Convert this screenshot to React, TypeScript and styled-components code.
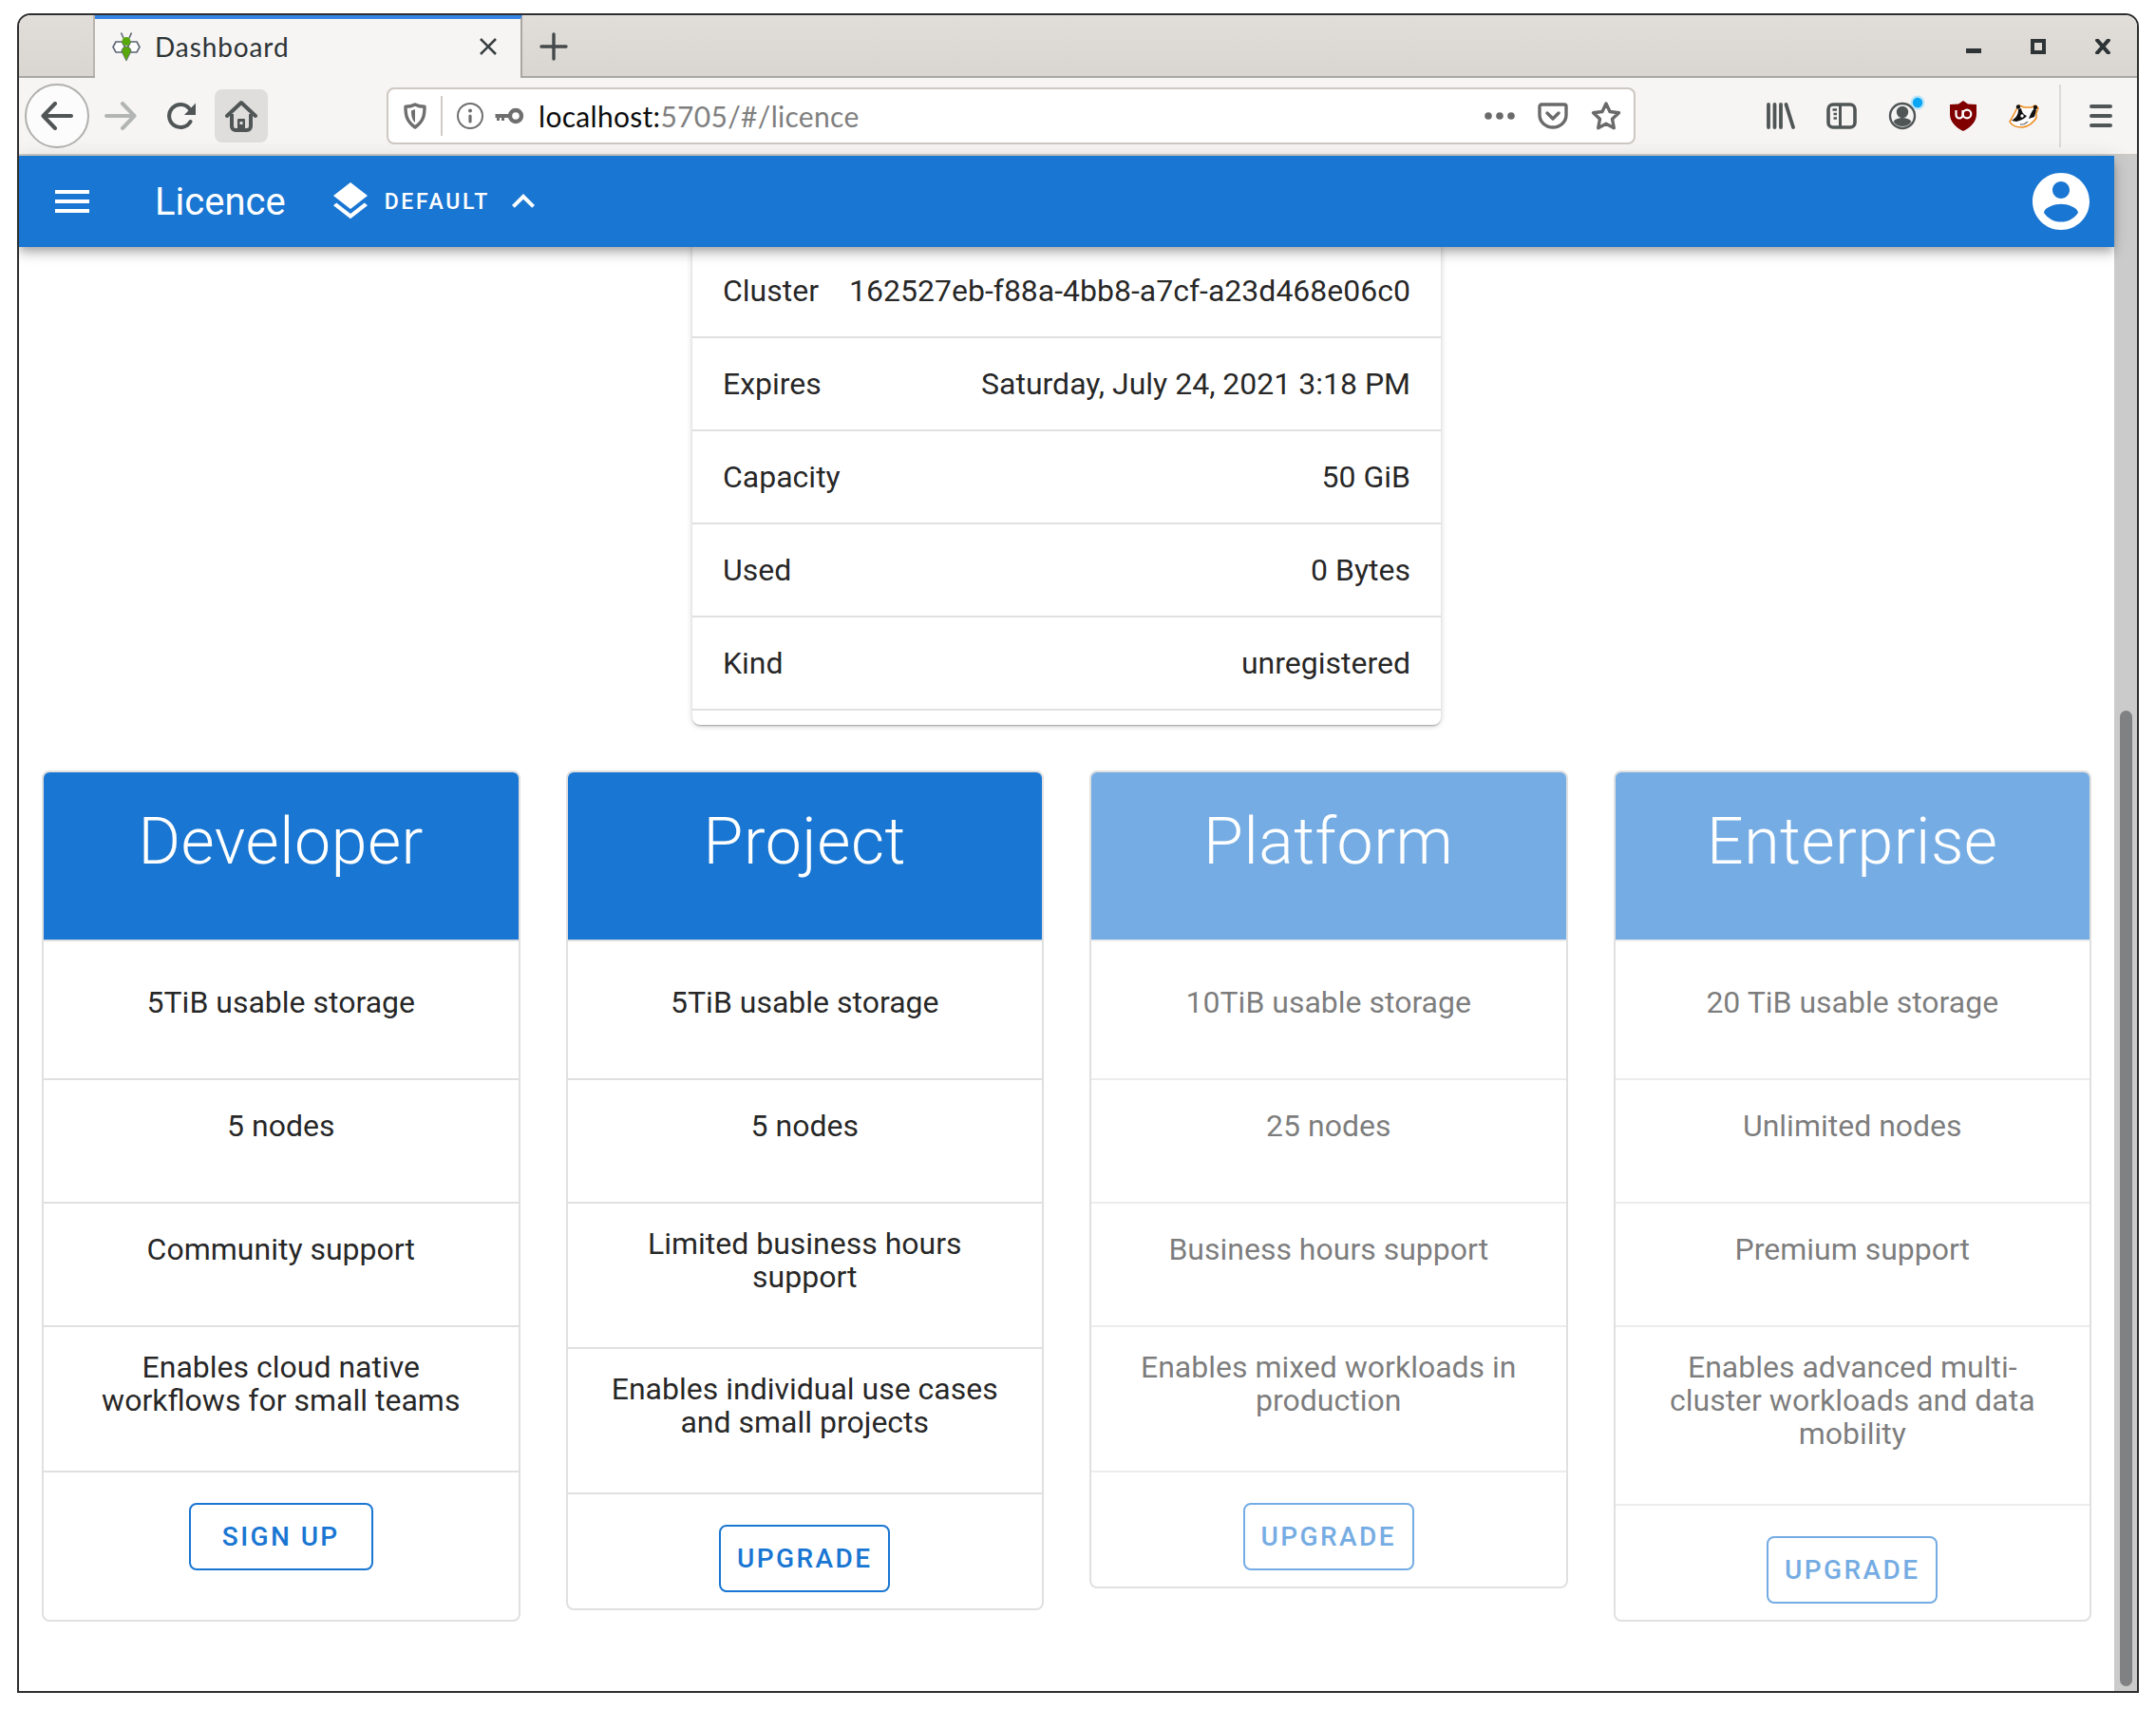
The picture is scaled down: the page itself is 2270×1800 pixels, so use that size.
import { createGlobalStyle } from "styled-components";
import styled from "styled-components";

const GlobalStyle = createGlobalStyle`
  html, body {
    margin: 0;
    padding: 0;
    background: #ffffff;
  }
  * {
    box-sizing: border-box;
  }
`;

const BLUE = "#1976d2";
const ICON = "#505556";

const Window = styled.div`
  display: flex;
  flex-direction: column;
  width: 2234px;
  height: 1768px;
  margin: 14px 0 0 18px;
  border: 2px solid #2e2e2e;
  border-radius: 14px 14px 0 0;
  overflow: hidden;
  background: #ffffff;
`;

const TitleBar = styled.div`
  display: flex;
  align-items: stretch;
  flex: none;
  height: 66px;
  background: linear-gradient(#e1deda, #d9d6d1);
  border-bottom: 2px solid #aaa8a3;
`;

const TabStub = styled.div`
  flex: none;
  width: 80px;
  border-right: 2px solid #b9b5ae;
`;

const Tab = styled.div`
  display: flex;
  align-items: center;
  flex: none;
  width: 450px;
  height: 66px;
  padding: 0 24px 4px 18px;
  background: #f6f5f4;
  border-top: 4px solid #3584e4;
  border-right: 2px solid #a9a6a0;
`;

const TabTitle = styled.span`
  flex: 1;
  margin-left: 15px;
  font-family: Lato, sans-serif;
  font-size: 28px;
  letter-spacing: 0.9px;
  color: #2e3436;
`;

const NewTab = styled.div`
  display: flex;
  align-items: center;
  margin-left: 18px;
  padding-top: 2px;
`;

const WindowControls = styled.div`
  display: flex;
  align-items: center;
  margin-left: auto;
  padding: 2px 28px 0 0;
  gap: 52px;
`;

const NavBar = styled.div`
  display: flex;
  align-items: center;
  flex: none;
  height: 82px;
  padding-left: 6px;
  background: #f6f5f4;
  border-bottom: 2px solid #cdc9c3;
`;

const BackButton = styled.div`
  display: flex;
  align-items: center;
  justify-content: center;
  flex: none;
  width: 68px;
  height: 68px;
  border: 2px solid #b0b0ae;
  border-radius: 50%;
  background: #fcfcfc;
`;

const NavSlot = styled.div<{ $width: number }>`
  display: flex;
  align-items: center;
  justify-content: center;
  flex: none;
  width: ${(p) => p.$width}px;
`;

const HomeButton = styled.div`
  display: flex;
  align-items: center;
  justify-content: center;
  flex: none;
  width: 56px;
  height: 56px;
  margin-left: 2px;
  border-radius: 8px;
  background: #dfdedc;
`;

const UrlBar = styled.div`
  display: flex;
  align-items: center;
  flex: none;
  width: 1315px;
  height: 60px;
  margin-left: 125px;
  padding: 0 13px 0 16px;
  background: #ffffff;
  border: 2px solid #cdc8c1;
  border-radius: 8px;
`;

const UrlDivider = styled.div`
  flex: none;
  width: 2px;
  height: 42px;
  margin: 0 15px 0 15px;
  background: #cfcbc5;
`;

const UrlText = styled.div`
  flex: 1;
  margin-left: 4px;
  font-family: Lato, sans-serif;
  font-size: 30px;
  letter-spacing: 0.3px;
  color: #7f7f7f;
  white-space: nowrap;
`;

const UrlHost = styled.span`
  color: #0c0c0c;
`;

const UrlActions = styled.div`
  display: flex;
  align-items: center;
  gap: 24px;
`;

const ToolbarIcons = styled.div`
  display: flex;
  align-items: center;
  margin-left: 121px;
`;

const ToolbarDivider = styled.div`
  flex: none;
  width: 2px;
  height: 66px;
  margin-left: 5px;
  background: #dcdad6;
`;

const MenuSlot = styled.div`
  display: flex;
  margin-left: 30px;
`;

const Viewport = styled.div`
  display: flex;
  flex: 1;
  min-height: 0;
`;

const Page = styled.div`
  display: flex;
  flex-direction: column;
  flex: 1;
  min-width: 0;
`;

const ScrollTrack = styled.div`
  flex: none;
  width: 24px;
  padding: 584px 5px 5px 6px;
  background: #cbcbcb;
`;

const ScrollThumb = styled.div`
  height: 100%;
  border-radius: 7px;
  background: #7f8182;
`;

const AppBar = styled.header`
  position: relative;
  z-index: 2;
  display: flex;
  align-items: center;
  flex: none;
  height: 96px;
  padding: 0 20px 0 38px;
  background: ${BLUE};
  color: #ffffff;
  box-shadow: 0 4px 8px -2px rgba(0, 0, 0, 0.2), 0 8px 10px 0 rgba(0, 0, 0, 0.14), 0 2px 20px 0 rgba(0, 0, 0, 0.12);
`;

const AppTitle = styled.div`
  margin-left: 69px;
  font-family: Roboto, sans-serif;
  font-size: 40px;
  font-weight: 400;
`;

const Namespace = styled.div`
  display: flex;
  align-items: center;
  margin-left: 44px;
`;

const NamespaceLabel = styled.span`
  margin: 0 11px 0 12px;
  font-family: Roboto, sans-serif;
  font-size: 23px;
  font-weight: 500;
  letter-spacing: 2.7px;
`;

const Avatar = styled.div`
  display: flex;
  margin-left: auto;
`;

const LicenceCard = styled.div`
  flex: none;
  align-self: center;
  width: 788px;
  margin-top: -2px;
  padding-bottom: 15px;
  border-radius: 0 0 8px 8px;
  background: #ffffff;
  box-shadow: 0 2px 2px -1px rgba(0, 0, 0, 0.3), 0 1px 6px 0 rgba(0, 0, 0, 0.2);
`;

const LicenceRow = styled.div`
  display: flex;
  align-items: center;
  justify-content: space-between;
  height: 98px;
  padding: 0 32px;
  border-bottom: 2px solid #e0e0e0;
  font-family: Roboto, sans-serif;
  font-size: 32px;
  color: rgba(0, 0, 0, 0.87);
`;

const Plans = styled.div`
  display: grid;
  grid-template-columns: repeat(4, 1fr);
  align-items: start;
  gap: 48px;
  margin-top: 48px;
  padding: 0 24px;
`;

const PlanCard = styled.div<{ $stretch?: boolean }>`
  align-self: ${(p) => (p.$stretch ? "stretch" : "start")};
  border: 2px solid #e0e0e0;
  border-radius: 8px;
  overflow: hidden;
  background: #ffffff;
`;

const PlanBody = styled.div<{ $muted?: boolean }>`
  opacity: ${(p) => (p.$muted ? 0.6 : 1)};
`;

const PlanHeader = styled.div`
  height: 178px;
  padding-top: 31px;
  background: ${BLUE};
  border-bottom: 2px solid #e0e0e0;
  font-family: Roboto, sans-serif;
  font-size: 68px;
  font-weight: 300;
  line-height: 84px;
  letter-spacing: 0.5px;
  text-align: center;
  color: #ffffff;
`;

const Feature = styled.div<{ $first?: boolean }>`
  display: flex;
  align-items: center;
  justify-content: center;
  min-height: ${(p) => (p.$first ? 146 : 130)}px;
  padding: ${(p) => (p.$first ? 40 : 25)}px 32px 56px;
  border-bottom: 2px solid #e0e0e0;
  font-family: Roboto, sans-serif;
  font-size: 32px;
  line-height: 35px;
  text-align: center;
  color: rgba(0, 0, 0, 0.87);
`;

const PlanAction = styled.div`
  display: flex;
  justify-content: center;
  padding: 32px 0 17px;
`;

const PlanButton = styled.div<{ $wide?: boolean }>`
  display: flex;
  align-items: center;
  height: 71px;
  padding: 0 ${(p) => (p.$wide ? 33 : 17)}px;
  border: 2px solid ${BLUE};
  border-radius: 8px;
  font-family: Roboto, sans-serif;
  font-size: 28px;
  font-weight: 500;
  letter-spacing: 2.4px;
  color: ${BLUE};
`;

type Plan = {
  name: string;
  features: string[];
  action: string;
  muted?: boolean;
  wide?: boolean;
};

const plans: Plan[] = [
  {
    name: "Developer",
    features: ["5TiB usable storage", "5 nodes", "Community support", "Enables cloud native workflows for small teams"],
    action: "SIGN UP",
    wide: true,
  },
  {
    name: "Project",
    features: ["5TiB usable storage", "5 nodes", "Limited business hours support", "Enables individual use cases and small projects"],
    action: "UPGRADE",
  },
  {
    name: "Platform",
    features: ["10TiB usable storage", "25 nodes", "Business hours support", "Enables mixed workloads in production"],
    action: "UPGRADE",
    muted: true,
  },
  {
    name: "Enterprise",
    features: ["20 TiB usable storage", "Unlimited nodes", "Premium support", "Enables advanced multi-cluster workloads and data mobility"],
    action: "UPGRADE",
    muted: true,
  },
];

const licence = [
  ["Cluster", "162527eb-f88a-4bb8-a7cf-a23d468e06c0"],
  ["Expires", "Saturday, July 24, 2021 3:18 PM"],
  ["Capacity", "50 GiB"],
  ["Used", "0 Bytes"],
  ["Kind", "unregistered"],
];

function BeeIcon() {
  return (
    <svg width="30" height="32" viewBox="0 0 30 32">
      <path d="M12 7 9.500 1.500M18 7l2.500-5.500" stroke="#5c6472" strokeWidth="1.600" fill="none" />
      <path d="M1 16.500 4 11h6.500l3 5.500-3 5.500H4zM29 16.500 26 11h-6.500l-3 5.500 3 5.500H26z" fill="#fff" stroke="#5c6472" strokeWidth="1.600" />
      <circle cx="15" cy="10.500" r="4.500" fill="#58a80c" />
      <path d="M15 31 10 21a5 5 0 0 1 10 0z" fill="#58a80c" stroke="#5c6472" strokeWidth="0.800" />
    </svg>
  );
}

function CloseTabIcon() {
  return (
    <svg width="20" height="20" viewBox="0 0 20 20">
      <path d="M2 2l16 16M18 2 2 18" stroke="#3a3f41" strokeWidth="2.600" />
    </svg>
  );
}

function PlusIcon() {
  return (
    <svg width="30" height="30" viewBox="0 0 30 30">
      <path d="M15 2v26M2 15h26" stroke="#44494b" strokeWidth="3.400" strokeLinecap="round" />
    </svg>
  );
}

function MinimizeIcon() {
  return (
    <svg width="16" height="16" viewBox="0 0 16 16">
      <rect x="0" y="10" width="16" height="5" fill="#2e3436" />
    </svg>
  );
}

function MaximizeIcon() {
  return (
    <svg width="16" height="16" viewBox="0 0 16 16">
      <rect x="2" y="2" width="12" height="12" fill="none" stroke="#2e3436" strokeWidth="4" />
    </svg>
  );
}

function WinCloseIcon() {
  return (
    <svg width="16" height="16" viewBox="0 0 16 16">
      <path d="M1 0l14 16M15 0 1 16" stroke="#2e3436" strokeWidth="4" />
    </svg>
  );
}

function ArrowIcon({ color, flip }: { color: string; flip?: boolean }) {
  return (
    <svg width="34" height="30" viewBox="0 0 34 30" style={flip ? { transform: "scaleX(-1)" } : undefined}>
      <path d="M32 15H3M15 2 2.500 15 15 28" fill="none" stroke={color} strokeWidth="4" strokeLinecap="round" strokeLinejoin="round" />
    </svg>
  );
}

function ReloadIcon() {
  return (
    <svg width="32" height="30" viewBox="0 0 32 30">
      <path d="M24.500 21a12 12 0 1 1-1-13.500" fill="none" stroke={ICON} strokeWidth="4" strokeLinecap="round" />
      <path d="M30 1.500v12.500H18z" fill={ICON} />
    </svg>
  );
}

function HomeIcon() {
  return (
    <svg width="34" height="34" viewBox="0 0 34 34">
      <path d="M2 17 17 3l15 14" fill="none" stroke={ICON} strokeWidth="4" strokeLinecap="round" strokeLinejoin="round" />
      <path d="M7 15v13a4 4 0 0 0 4 4h12a4 4 0 0 0 4-4V15" fill="none" stroke={ICON} strokeWidth="4" />
      <path d="M13 31V21a1 1 0 0 1 1-1h6a1 1 0 0 1 1 1v10z" fill={ICON} />
      <rect x="15.500" y="23" width="3" height="3" fill="#dfdedc" />
    </svg>
  );
}

function ShieldIcon() {
  return (
    <svg width="24" height="28" viewBox="0 0 24 28">
      <path d="M12 2c3 1.600 6 2.300 10 2.300 0 8-.5 15-10 21.700C2.500 19.300 2 12.300 2 4.300 6 4.300 9 3.600 12 2z" fill="none" stroke="#6f6f6f" strokeWidth="3.400" strokeLinejoin="round" />
      <path d="M12 7v14c-3.500-3-4-7-4-12.400z" fill="#6f6f6f" />
    </svg>
  );
}

function InfoIcon() {
  return (
    <svg width="28" height="28" viewBox="0 0 28 28">
      <circle cx="14" cy="14" r="13" fill="none" stroke="#6f6f6f" strokeWidth="2" />
      <circle cx="14" cy="8.500" r="2" fill="#6f6f6f" />
      <rect x="12.400" y="12.500" width="3.200" height="9" rx="1.600" fill="#6f6f6f" />
    </svg>
  );
}

function KeyIcon() {
  return (
    <svg width="32" height="18" viewBox="0 0 32 18">
      <circle cx="23" cy="9" r="6" fill="none" stroke="#6f6f6f" strokeWidth="4.400" />
      <path d="M17 7H1.500v4H3v3h3v-3h2v3h3v-3h6z" fill="#6f6f6f" />
    </svg>
  );
}

function DotsIcon() {
  return (
    <svg width="32" height="10" viewBox="0 0 32 10">
      <circle cx="4" cy="5" r="3.800" fill="#6a6a6a" />
      <circle cx="16" cy="5" r="3.800" fill="#6a6a6a" />
      <circle cx="28" cy="5" r="3.800" fill="#6a6a6a" />
    </svg>
  );
}

function PocketIcon() {
  return (
    <svg width="32" height="28" viewBox="0 0 32 28">
      <path d="M4 2h24a2 2 0 0 1 2 2v9a14 13 0 0 1-28 0V4a2 2 0 0 1 2-2z" fill="none" stroke="#6a6a6a" strokeWidth="3.400" />
      <path d="M10 11l6 6 6-6" fill="none" stroke="#6a6a6a" strokeWidth="3.400" strokeLinecap="round" strokeLinejoin="round" />
    </svg>
  );
}

function StarIcon() {
  return (
    <svg width="32" height="32" viewBox="0 0 32 32">
      <path d="M16 3l4 8.500 9.500 1.300-7 6.500 1.800 9.400L16 24.200l-8.300 4.500 1.800-9.400-7-6.500L12 11.500z" fill="none" stroke="#6a6a6a" strokeWidth="3.400" strokeLinejoin="round" />
    </svg>
  );
}

function LibraryIcon() {
  return (
    <svg width="30" height="28" viewBox="0 0 30 28">
      <path d="M2 2v24M8.500 2v24M15 2v24M20.500 2l7.500 24" stroke={ICON} strokeWidth="3.800" strokeLinecap="round" />
    </svg>
  );
}

function SidebarIcon() {
  return (
    <svg width="32" height="28" viewBox="0 0 32 28">
      <rect x="2" y="2" width="28" height="24" rx="5" fill="none" stroke={ICON} strokeWidth="3.600" />
      <path d="M14.500 2v24" stroke={ICON} strokeWidth="3" />
      <path d="M6.500 7.500h4.500M7.500 12h3.500M7.500 16.500h3.500" stroke={ICON} strokeWidth="2.400" />
    </svg>
  );
}

function AccountIcon() {
  return (
    <svg width="48" height="44" viewBox="0 0 48 44">
      <circle cx="24" cy="22" r="13" fill="none" stroke={ICON} strokeWidth="2.400" />
      <circle cx="24" cy="18" r="6.200" fill={ICON} />
      <path d="M14.500 28c2-3 6-4 9.500-4s7.500 1 9.500 4c-2 3.500-5.500 5-9.500 5s-7.500-1.500-9.500-5z" fill={ICON} />
      <circle cx="40" cy="8" r="7.500" fill="#00b3ff" fillOpacity="0.25" />
      <circle cx="40" cy="8" r="5.200" fill="#0aa5f5" />
    </svg>
  );
}

function UBlockIcon() {
  return (
    <svg width="28" height="32" viewBox="0 0 28 32">
      <path d="M14 0l5 3.500 9 .5v10c0 8-6 14-14 18C6 28 0 22 0 14V4l9-.5z" fill="#800000" />
      <path d="M6.500 10v5a3.500 3.500 0 0 0 7 0v-5" fill="none" stroke="#fff" strokeWidth="2.200" />
      <circle cx="18" cy="14" r="4.300" fill="none" stroke="#fff" strokeWidth="2.200" />
    </svg>
  );
}

function BadgerIcon() {
  return (
    <svg width="32" height="26" viewBox="0 0 32 26">
      <path d="M1 19C4 14 7 9 9 4l2-2 5 2h8l4-2 3 3-2 5v5c-3 5-9 10-15 10-6 0-11-2-13-6z" fill="#fff" stroke="#ee8a1a" strokeWidth="1.500" />
      <path d="M3 18c4-3 7-5 7-12l3-1c1 5 3 7 6 8-2 3-7 5-11 6z" fill="#111" />
      <path d="M27 5l2 2-2 7-6 2c1-3 3-8 6-11z" fill="#111" />
      <circle cx="10" cy="3.500" r="2.200" fill="#111" />
      <circle cx="28" cy="4" r="2.200" fill="#111" />
      <circle cx="14" cy="13" r="1.700" fill="#fff" />
      <path d="M12 22c3 .5 6-1 8-3" fill="none" stroke="#777" strokeWidth="1.400" />
    </svg>
  );
}

function MenuLines({ color, width, gap, thick }: { color: string; width: number; gap: number; thick: number }) {
  return (
    <svg width={width} height={gap * 2 + thick} viewBox={`0 0 ${width} ${gap * 2 + thick}`}>
      {[0, 1, 2].map((i) => (
        <rect key={i} x="0" y={i * gap} width={width} height={thick} rx={color === ICON ? 2 : 0} fill={color} />
      ))}
    </svg>
  );
}

function LayersIcon() {
  return (
    <svg width="48" height="48" viewBox="0 0 24 24">
      <path fill="#fff" d="M11.990 18.540l-7.370-5.730L3 14.070l9 7 9-7-1.630-1.270-7.380 5.740zM12 16l7.360-5.730L21 9l-9-7-9 7 1.630 1.270L12 16z" />
    </svg>
  );
}

function ChevronUp() {
  return (
    <svg width="48" height="48" viewBox="0 0 24 24">
      <path fill="#fff" d="M12 8l-6 6 1.410 1.410L12 10.830l4.590 4.580L18 14z" />
    </svg>
  );
}

function AccountCircle() {
  return (
    <svg width="72" height="72" viewBox="0 0 24 24">
      <path fill="#fff" d="M12 2C6.480 2 2 6.480 2 12s4.480 10 10 10 10-4.480 10-10S17.520 2 12 2zm0 3c1.660 0 3 1.340 3 3s-1.340 3-3 3-3-1.340-3-3 1.340-3 3-3zm0 14.200c-2.500 0-4.710-1.280-6-3.220.030-1.990 4-3.080 6-3.080 1.990 0 5.970 1.090 6 3.080-1.290 1.940-3.500 3.220-6 3.220z" />
    </svg>
  );
}

export default function App() {
  return (
    <>
      <GlobalStyle />
      <Window>
        <TitleBar>
          <TabStub />
          <Tab>
            <BeeIcon />
            <TabTitle>Dashboard</TabTitle>
            <CloseTabIcon />
          </Tab>
          <NewTab>
            <PlusIcon />
          </NewTab>
          <WindowControls>
            <MinimizeIcon />
            <MaximizeIcon />
            <WinCloseIcon />
          </WindowControls>
        </TitleBar>
        <NavBar>
          <BackButton>
            <ArrowIcon color={ICON} />
          </BackButton>
          <NavSlot $width={66}>
            <ArrowIcon color="#b3b5b4" flip />
          </NavSlot>
          <NavSlot $width={64}>
            <ReloadIcon />
          </NavSlot>
          <HomeButton>
            <HomeIcon />
          </HomeButton>
          <UrlBar>
            <ShieldIcon />
            <UrlDivider />
            <InfoIcon />
            <NavSlot $width={54}>
              <KeyIcon />
            </NavSlot>
            <UrlText>
              <UrlHost>localhost:</UrlHost>5705/#/licence
            </UrlText>
            <UrlActions>
              <DotsIcon />
              <PocketIcon />
              <StarIcon />
            </UrlActions>
          </UrlBar>
          <ToolbarIcons>
            <NavSlot $width={64}>
              <LibraryIcon />
            </NavSlot>
            <NavSlot $width={64}>
              <SidebarIcon />
            </NavSlot>
            <NavSlot $width={64}>
              <AccountIcon />
            </NavSlot>
            <NavSlot $width={64}>
              <UBlockIcon />
            </NavSlot>
            <NavSlot $width={64}>
              <BadgerIcon />
            </NavSlot>
          </ToolbarIcons>
          <ToolbarDivider />
          <MenuSlot>
            <MenuLines color={ICON} width={24} gap={10} thick={4} />
          </MenuSlot>
        </NavBar>
        <Viewport>
          <Page>
            <AppBar>
              <MenuLines color="#fff" width={36} gap={10} thick={4} />
              <AppTitle>Licence</AppTitle>
              <Namespace>
                <LayersIcon />
                <NamespaceLabel>DEFAULT</NamespaceLabel>
                <ChevronUp />
              </Namespace>
              <Avatar>
                <AccountCircle />
              </Avatar>
            </AppBar>
            <LicenceCard>
              {licence.map(([label, value]) => (
                <LicenceRow key={label}>
                  <span>{label}</span>
                  <span>{value}</span>
                </LicenceRow>
              ))}
            </LicenceCard>
            <Plans>
              {plans.map((plan) => (
                <PlanCard key={plan.name} $stretch={plan.wide}>
                  <PlanBody $muted={plan.muted}>
                    <PlanHeader>{plan.name}</PlanHeader>
                    {plan.features.map((feature, i) => (
                      <Feature key={feature} $first={i === 0}>
                        {feature}
                      </Feature>
                    ))}
                    <PlanAction>
                      <PlanButton $wide={plan.wide}>{plan.action}</PlanButton>
                    </PlanAction>
                  </PlanBody>
                </PlanCard>
              ))}
            </Plans>
          </Page>
          <ScrollTrack>
            <ScrollThumb />
          </ScrollTrack>
        </Viewport>
      </Window>
    </>
  );
}
